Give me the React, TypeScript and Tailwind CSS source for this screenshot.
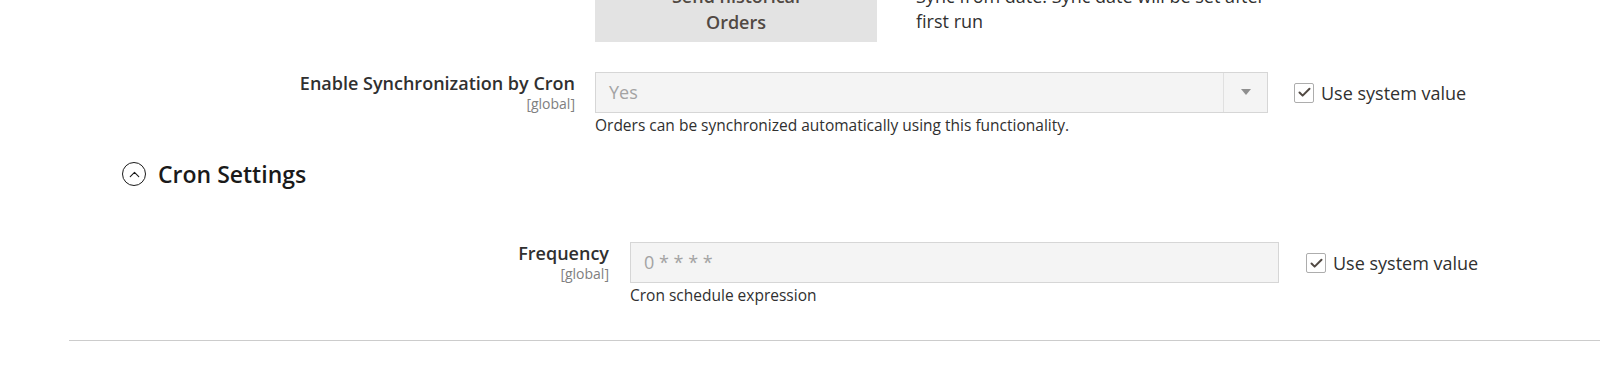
import { Check, ChevronUp } from "lucide-react";

// Magento-style config rows, scaled admin view
const font = "font-['Open_Sans','Liberation_Sans',sans-serif]";

function UseSystemValue() {
  return (
    <label className="flex items-start gap-[7px] pt-[11px] text-[18px] leading-[20px] text-[#303030]">
      <span className="flex h-[20px] w-[20px] shrink-0 items-center justify-center rounded-[2px] border border-[#adadad] bg-white">
        <Check className="h-[15px] w-[15px] text-[#514943]" strokeWidth={3.2} />
      </span>
      <span className="whitespace-nowrap">Use system value</span>
    </label>
  );
}

function FieldLabel({ title }: { title: string }) {
  return (
    <div className="-mt-[1px] flex flex-col items-end text-right">
      <span className="text-[18px] font-semibold leading-[24px] text-[#303030]">{title}</span>
      <span className="text-[14px] leading-[17px] text-[#808080]">[global]</span>
    </div>
  );
}

export default function App() {
  return (
    <div className={`${font} h-[368px] w-[1600px] overflow-hidden bg-white pl-[69px]`}>
      {/* historical orders row (cut off at top) */}
      <div className="-mt-[24px] flex">
        <div className="w-[506px] shrink-0" />
        <div className="ml-[20px] flex items-start">
          <button className="h-[66px] w-[282px] bg-[#e3e3e3] px-4 text-center text-[18px] font-semibold leading-[26px] text-[#514943]">
            Send historical
            <br />
            Orders
          </button>
          <p className="ml-[39px] mt-[7.5px] w-[352px] text-[18px] leading-[25px] text-[#303030]">
            Sync from date. Sync date will be set after first run
          </p>
        </div>
      </div>

      {/* enable by cron */}
      <div className="mt-[29.7px] flex">
        <div className="w-[506px] shrink-0">
          <FieldLabel title="Enable Synchronization by Cron" />
        </div>
        <div className="ml-[20px] w-[673px] shrink-0">
          <div className="flex h-[41px] items-stretch border border-[#d6d6d6] bg-[#f4f4f4]">
            <span className="flex flex-1 items-center pl-[13px] text-[18px] text-[#a3a3a3]">Yes</span>
            <span className="flex w-[44px] items-center justify-center border-l border-[#e0e0e0]">
              <span className="h-0 w-0 border-x-[5px] border-t-[6px] border-x-transparent border-t-[#8f8f8f]" />
            </span>
          </div>
          <p className="mt-[2px] text-[15.5px] leading-[20px] text-[#303030]">
            Orders can be synchronized automatically using this functionality.
          </p>
        </div>
        <div className="ml-[26px]">
          <UseSystemValue />
        </div>
      </div>

      {/* cron settings group */}
      <div className="ml-[53px] mt-[23.5px] flex h-[32px] items-center">
        <span className="flex h-[24px] w-[24px] items-center justify-center rounded-full border-[1.5px] border-[#1a1a1a]">
          <ChevronUp className="h-[17px] w-[17px] text-[#1a1a1a]" strokeWidth={1.6} />
        </span>
        <h3 className="ml-[12px] text-[23px] font-semibold leading-[32px] text-[#1a1a1a]">Cron Settings</h3>
      </div>

      <div className="mt-[52px] flex">
        <div className="w-[540px] shrink-0">
          <FieldLabel title="Frequency" />
        </div>
        <div className="ml-[21px] w-[649px] shrink-0">
          <div className="flex h-[41px] items-center border border-[#d6d6d6] bg-[#f4f4f4] pl-[13px] text-[18px] text-[#a3a3a3]">
            0 * * * *
          </div>
          <p className="mt-[2px] text-[15.5px] leading-[20px] text-[#303030]">Cron schedule expression</p>
        </div>
        <div className="ml-[27px]">
          <UseSystemValue />
        </div>
      </div>

      <div className="mt-[35px] border-t border-[#cccccc]" />
    </div>
  );
}
